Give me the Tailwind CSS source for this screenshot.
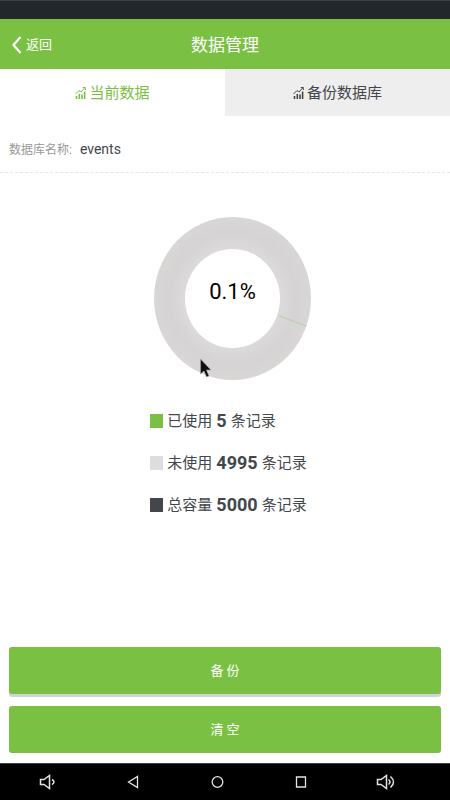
<!DOCTYPE html>
<html lang="zh-CN">
<head>
<meta charset="utf-8">
<meta name="viewport" content="width=device-width, initial-scale=1">
<title>数据管理</title>
<script src="https://cdn.jsdelivr.net/npm/@tailwindcss/browser@4"></script>
</head>
<body class="min-h-screen flex flex-col bg-white text-[#43474b] font-[Roboto,'Noto_Sans_CJK_SC',sans-serif]">
  <div class="h-[19px] bg-[#22272b] border-t border-[#3c4145]"></div>
  <header class="h-[50px] grid grid-cols-3 items-center pt-[2px] bg-[#7ac143] text-white">
    <a href="#" class="flex items-center gap-1 pl-3 text-[13px] leading-5">
      <svg class="w-[10px] h-[18px]" viewBox="0 0 10 18" fill="none" stroke="currentColor" stroke-width="2.2"><path d="M8.5 1 1.5 9l7 8"/></svg>
      返回
    </a>
    <h1 class="text-center text-[17px] leading-6">数据管理</h1>
  </header>
  <nav class="grid grid-cols-2 h-[47px] text-[15px]">
    <a href="#" class="flex items-center justify-center gap-[3px] pt-[2px] text-[#7ac143]">
      <svg class="w-[11px] h-[13px]" viewBox="0 0 11 13" fill="none" stroke="currentColor"><path d="M1.5 12V9M4.300 12V7M7 12V7.500M9.600 12V4.500" stroke-width="1.600"/><path d="M.5 7 4 3.500l2 1.500L10 .5" stroke-width="1"/><path d="M7.800.5h2.500v2.500" stroke-width="1"/></svg>
      当前数据
    </a>
    <a href="#" class="flex items-center justify-center gap-[3px] pt-[2px] bg-[#eeeeee]">
      <svg class="w-[11px] h-[13px]" viewBox="0 0 11 13" fill="none" stroke="currentColor"><path d="M1.5 12V9M4.300 12V7M7 12V7.500M9.600 12V4.500" stroke-width="1.600"/><path d="M.5 7 4 3.500l2 1.500L10 .5" stroke-width="1"/><path d="M7.800.5h2.500v2.500" stroke-width="1"/></svg>
      备份数据库
    </a>
  </nav>
  <main class="flex-1 flex flex-col">
    <dl class="flex items-center gap-2 h-[57px] px-[9px] pt-[11px] border-b border-dashed border-[#e6e6e6]">
      <dt class="text-[12px] text-[#999999]">数据库名称:</dt>
      <dd class="text-[14px]">events</dd>
    </dl>
    <section class="flex flex-col items-center pt-11">
      <svg class="w-[158px] h-[164px] ml-[15px]" viewBox="0 0 158 164" role="img" aria-label="已使用 0.1%">
        <defs>
          <radialGradient id="ring">
            <stop offset=".6" stop-color="#dcdada"/>
            <stop offset=".8" stop-color="#d5d3d3"/>
            <stop offset="1" stop-color="#d9d6d6"/>
          </radialGradient>
        </defs>
        <ellipse cx="78.500" cy="81.500" rx="78.500" ry="81.500" fill="url(#ring)"/>
        <ellipse cx="78.500" cy="81.500" rx="47.500" ry="49.500" fill="#fff"/>
        <path d="M124.500 98.500 152.500 109" stroke="#b4cf9c" stroke-width=".9"/>
        <text x="78.500" y="82" text-anchor="middle" font-size="22" fill="#000">0.1%</text>
        <path d="M46.500 142v15l3.500-3 2.500 6 2.500-1-2.500-6h4.500z" fill="#111" stroke="#aaa" stroke-width=".6"/>
      </svg>
      <ul class="flex flex-col gap-[18px] pt-7 ml-[7px] text-[15px] leading-6">
        <li class="flex items-center gap-1"><span class="w-[13px] h-[14px] bg-[#7ac143]"></span>已使用 <b class="text-[18px]">5</b> 条记录</li>
        <li class="flex items-center gap-1"><span class="w-[13px] h-[14px] bg-[#dddddd]"></span>未使用 <b class="text-[18px]">4995</b> 条记录</li>
        <li class="flex items-center gap-1"><span class="w-[13px] h-[14px] bg-[#43474b]"></span>总容量 <b class="text-[18px]">5000</b> 条记录</li>
      </ul>
    </section>
    <div class="mt-auto flex flex-col gap-3 px-[9px] pb-[10px] text-[13px] text-white">
      <button type="button" class="h-[47px] rounded-[3px] bg-[#7ac143] shadow-[0_3px_1px_#d0d3d6]">备 份</button>
      <button type="button" class="h-[47px] rounded-[3px] bg-[#7ac143]">清 空</button>
    </div>
  </main>
  <footer class="h-[37px] grid grid-cols-5 items-center justify-items-center pl-[6px] pr-[22px] bg-black text-[#e4e4e4] border-t border-[#3c4145]">
    <button type="button" aria-label="降低音量"><svg class="w-5 h-4" viewBox="0 0 20 16" fill="none" stroke="currentColor" stroke-width="1.500"><path d="M2.500 5.500H6L11.500 1.500v13L6 10.500H2.500zM14 5.500q4 2.500 0 5"/></svg></button>
    <button type="button" aria-label="后退"><svg class="w-5 h-4" viewBox="0 0 20 16" fill="none" stroke="currentColor" stroke-width="1.300"><path d="M5.500 8 14.500 2.500v11z"/></svg></button>
    <button type="button" aria-label="主页"><svg class="w-5 h-4" viewBox="0 0 20 16" fill="none" stroke="currentColor" stroke-width="1.300"><circle cx="10.500" cy="8" r="5.300"/></svg></button>
    <button type="button" aria-label="最近任务"><svg class="w-5 h-4" viewBox="0 0 20 16" fill="none" stroke="currentColor" stroke-width="1.300"><path d="M5.500 3h9v10h-9z"/></svg></button>
    <button type="button" aria-label="提高音量"><svg class="w-5 h-4" viewBox="0 0 20 16" fill="none" stroke="currentColor" stroke-width="1.500"><path d="M1.500 5.500H5L10.500 1.500v13L5 10.500H1.500zM12.500 5.500q3 2.500 0 5M14.500 2.500q6 5.500 0 11"/></svg></button>
  </footer>
</body>
</html>
